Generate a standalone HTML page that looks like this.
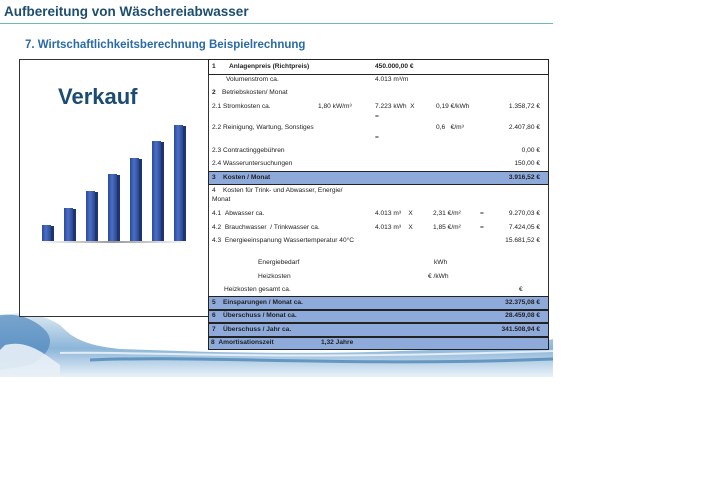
<!DOCTYPE html>
<html><head><meta charset="utf-8"><style>
body{margin:0;width:702px;height:497px;background:#fff;position:relative;overflow:hidden;font-family:"Liberation Sans",sans-serif;}
.a{position:absolute;white-space:nowrap;font-size:6.6px;color:#222;line-height:8px;}
.b{font-weight:bold;}
.r{text-align:right;}
.bar{position:absolute;background:linear-gradient(90deg,#2a4a9a,#4b6fc4 45%,#2a4690);}
.bar:after{content:"";position:absolute;right:-3px;top:1px;bottom:0;width:3px;background:#1d3470;}
.row{position:absolute;left:208px;width:341px;background:#8eaadb;border:1px solid #222;box-sizing:border-box;}
</style></head><body>
<div class="a b" style="left:4px;top:4px;font-size:13.5px;line-height:16px;color:#1d4d6f;">Aufbereitung von Wäschereiabwasser</div>
<div style="position:absolute;left:0;top:23px;width:553px;height:1px;background:#6cbcb0;"></div>
<div class="a b" style="left:25px;top:38px;font-size:11.5px;line-height:14px;color:#2a6aa8;">7. Wirtschaftlichkeitsberechnung Beispielrechnung</div>

<svg style="position:absolute;left:0;top:305px" width="553" height="75">
<defs><linearGradient id="w" x1="0" y1="0" x2="0" y2="1"><stop offset="0" stop-color="#d4e4f0"/><stop offset=".55" stop-color="#6fa3cf"/><stop offset="1" stop-color="#e4eef6"/></linearGradient></defs>
<path d="M0 12 C20 5 40 8 60 20 C70 30 80 40 120 44 C200 47 300 50 400 46 C470 44 520 42 553 34 L553 72 L0 72Z" fill="url(#w)" opacity=".8"/>
<path d="M0 10 C20 8 35 15 45 25 C55 35 50 50 30 60 L0 65Z" fill="#4f87bd" opacity=".7"/>
<path d="M5 40 C25 35 40 45 60 60 L60 72 L0 72 L0 45Z" fill="#e8f0f6" opacity=".9"/>
<path d="M90 55 C200 50 350 62 553 54" stroke="#2f6fa8" stroke-width="3" fill="none" opacity=".6"/>
<path d="M60 48 C150 46 250 56 553 46" stroke="#fff" stroke-width="2" fill="none" opacity=".7"/>
</svg>

<div style="position:absolute;left:19px;top:59px;width:190px;height:258px;border:1px solid #333;box-sizing:border-box;background:#fff;"></div>
<div class="a b" style="left:58px;top:84px;font-size:22px;line-height:25px;color:#1c4b73;">Verkauf</div>
<div class="bar" style="left:42px;top:225px;width:9px;height:16px"></div>
<div class="bar" style="left:64px;top:208px;width:9px;height:33px"></div>
<div class="bar" style="left:86px;top:191px;width:9px;height:50px"></div>
<div class="bar" style="left:108px;top:174px;width:9px;height:67px"></div>
<div class="bar" style="left:130px;top:158px;width:9px;height:83px"></div>
<div class="bar" style="left:152px;top:141px;width:9px;height:100px"></div>
<div class="bar" style="left:174px;top:125px;width:9px;height:116px"></div>
<div style="position:absolute;left:38px;top:241px;width:152px;height:2px;background:linear-gradient(90deg,transparent,#999,transparent);"></div>

<div style="position:absolute;left:208px;top:59px;width:341px;height:238px;background:#fff;border:1px solid #333;border-top:none;box-sizing:border-box;"></div>
<div style="position:absolute;left:208px;top:59px;width:341px;height:16px;border:1px solid #222;box-sizing:border-box;"></div>
<div class="a b" style="left:212px;top:63px">1</div><div class="a b" style="left:229px;top:63px">Anlagenpreis (Richtpreis)</div><div class="a b" style="left:375px;top:63px">450.000,00 €</div>
<div class="a" style="left:226px;top:76px">Volumenstrom ca.</div><div class="a" style="left:375px;top:76px">4.013 m³/m</div>
<div class="a b" style="left:212px;top:89px">2</div><div class="a" style="left:222px;top:89px">Betriebskosten/ Monat</div>
<div class="a" style="left:212px;top:103px">2.1 Stromkosten ca.</div><div class="a" style="left:318px;top:103px">1,80 kW/m³</div><div class="a" style="left:375px;top:103px">7.223 kWh &nbsp;X</div><div class="a" style="left:436px;top:103px">0,19 €/kWh</div><div class="a r" style="left:480px;width:60px;top:103px">1.358,72 €</div>
<div class="a" style="left:375px;top:113px">=</div>
<div class="a" style="left:212px;top:124px">2.2 Reinigung, Wartung, Sonstiges</div><div class="a" style="left:436px;top:124px">0,6 &nbsp; €/m³</div><div class="a r" style="left:480px;width:60px;top:124px">2.407,80 €</div>
<div class="a" style="left:375px;top:134px">=</div>
<div class="a" style="left:212px;top:147px">2.3 Contractinggebühren</div><div class="a r" style="left:480px;width:60px;top:147px">0,00 €</div>
<div class="a" style="left:212px;top:160px">2.4 Wasseruntersuchungen</div><div class="a r" style="left:480px;width:60px;top:160px">150,00 €</div>
<div class="row" style="top:171px;height:14px"></div>
<div class="a b" style="left:212px;top:174px">3 &nbsp;&nbsp; Kosten / Monat</div><div class="a b r" style="left:480px;width:60px;top:174px">3.916,52 €</div>
<div class="a" style="left:212px;top:187px">4 &nbsp;&nbsp; Kosten für Trink- und Abwasser, Energie/</div><div class="a" style="left:212px;top:196px">Monat</div>
<div class="a" style="left:212px;top:210px">4.1 &nbsp;Abwasser ca.</div><div class="a" style="left:375px;top:210px">4.013 m³ &nbsp;&nbsp; X</div><div class="a" style="left:433px;top:210px">2,31 €/m²</div><div class="a" style="left:480px;top:210px">=</div><div class="a r" style="left:480px;width:60px;top:210px">9.270,03 €</div>
<div class="a" style="left:212px;top:224px">4.2 &nbsp;Brauchwasser &nbsp;/ Trinkwasser ca.</div><div class="a" style="left:375px;top:224px">4.013 m³ &nbsp;&nbsp; X</div><div class="a" style="left:433px;top:224px">1,85 €/m²</div><div class="a" style="left:480px;top:224px">=</div><div class="a r" style="left:480px;width:60px;top:224px">7.424,05 €</div>
<div class="a" style="left:212px;top:237px">4.3 &nbsp;Energieeinspanung Wassertemperatur 40°C</div><div class="a r" style="left:470px;width:70px;top:237px">15.681,52 €</div>
<div class="a" style="left:258px;top:259px">Energiebedarf</div><div class="a" style="left:434px;top:259px">kWh</div>
<div class="a" style="left:258px;top:273px">Heizkosten</div><div class="a" style="left:428px;top:273px">€ /kWh</div>
<div class="a" style="left:224px;top:286px">Heizkosten gesamt ca.</div><div class="a" style="left:519px;top:286px">€</div>
<div class="row" style="top:296px;height:14px"></div>
<div class="a b" style="left:212px;top:299px">5 &nbsp;&nbsp; Einsparungen / Monat ca.</div><div class="a b r" style="left:470px;width:70px;top:299px">32.375,08 €</div>
<div class="row" style="top:310px;height:13px"></div>
<div class="a b" style="left:212px;top:312px">6 &nbsp;&nbsp; Überschuss / Monat ca.</div><div class="a b r" style="left:470px;width:70px;top:312px">28.459,08 €</div>
<div class="row" style="top:323px;height:14px"></div>
<div class="a b" style="left:212px;top:326px">7 &nbsp;&nbsp; Überschuss / Jahr ca.</div><div class="a b r" style="left:470px;width:70px;top:326px">341.508,94 €</div>
<div class="row" style="top:337px;height:13px"></div>
<div class="a b" style="left:211px;top:339px">8 &nbsp;Amortisationszeit</div><div class="a b" style="left:321px;top:339px">1,32 Jahre</div>
</body></html>
